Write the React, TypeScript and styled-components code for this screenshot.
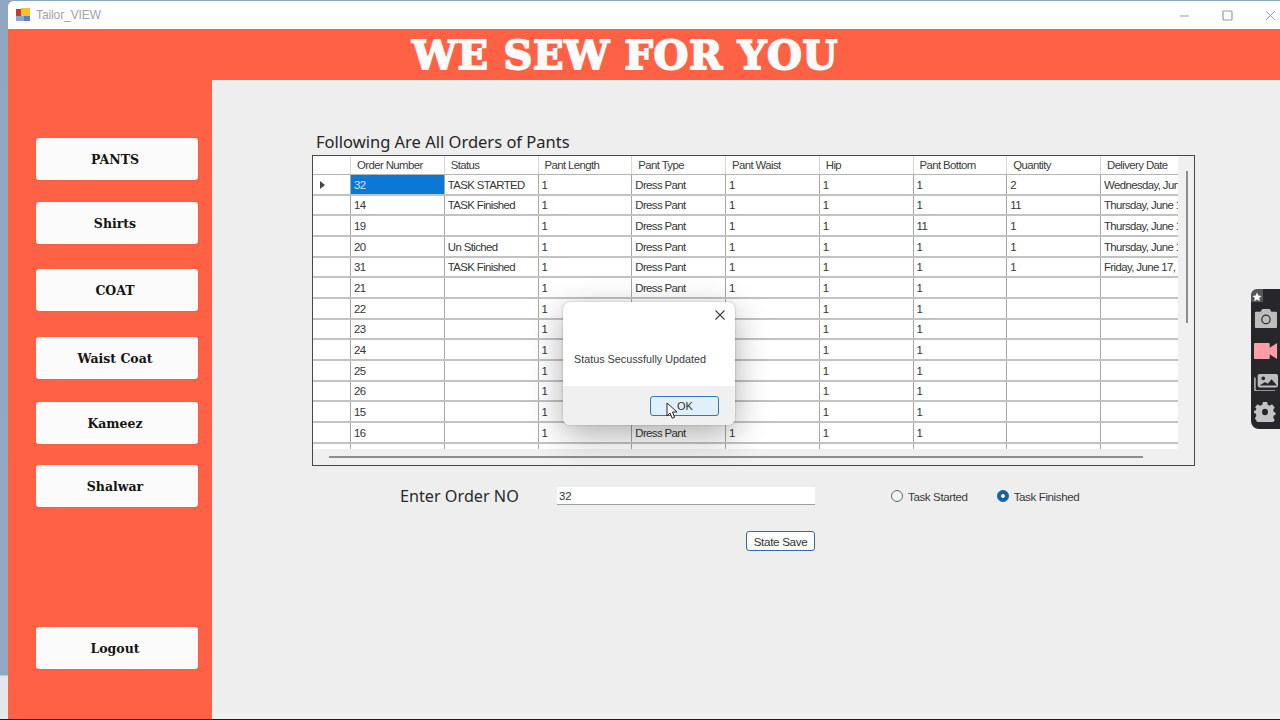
import React from "react";
import styled, { createGlobalStyle } from "styled-components";

const GlobalStyle = createGlobalStyle`
  html, body {
    margin: 0;
    padding: 0;
    background: #8ea6bf;
  }
  * {
    box-sizing: border-box;
  }
`;

const Desktop = styled.div`
  position: relative;
  width: 1280px;
  height: 720px;
  overflow: hidden;
  padding: 1px 0 0 8px;
  background: linear-gradient(#8fa7c0 0, #93a9c2 675px, #e3e7ec 676px);
  border-bottom: 1px solid #1c1c1c;
`;

const Window = styled.div`
  display: flex;
  flex-direction: column;
  height: 100%;
  border-top-left-radius: 6px;
  overflow: hidden;
  background: #eeeeef;
`;

const TitleBar = styled.div`
  display: flex;
  align-items: center;
  flex: 0 0 28px;
  padding-left: 8px;
  background: #fff;
`;

const AppName = styled.span`
  margin-left: 6px;
  font: 12px "Liberation Sans", sans-serif;
  letter-spacing: -0.1px;
  color: #a2a2a6;
`;

const WindowControls = styled.div`
  display: flex;
  align-items: center;
  margin-left: auto;
  margin-right: -12px;
  color: #9c9c9c;
`;

const WindowControl = styled.span`
  display: flex;
  justify-content: center;
  width: 43px;
`;

const Banner = styled.header`
  display: flex;
  justify-content: center;
  align-items: center;
  flex: 0 0 51px;
  padding-right: 38px;
  background: #ff6145;
`;

const BannerText = styled.h1`
  margin: 0;
  font: 700 40px "DejaVu Serif", serif;
  letter-spacing: 0.7px;
  color: #fdfafa;
  -webkit-text-stroke: 1.8px #fdfafa;
  white-space: nowrap;
`;

const Body = styled.div`
  display: flex;
  flex: 1;
  min-height: 0;
`;

const Sidebar = styled.nav`
  display: flex;
  flex-direction: column;
  flex: 0 0 204px;
  padding: 58px 14px 50px 28px;
  background: #ff6145;
`;

const SideButton = styled.button<{ $gap: number }>`
  flex: 0 0 42px;
  margin-top: ${({ $gap }) => $gap}px;
  padding: 0 4px 0 0;
  border: 0;
  border-radius: 3px;
  background: #fcfbfb;
  box-shadow: 0 0 1px rgba(120, 50, 40, 0.6);
  font: 700 12.5px "DejaVu Serif", serif;
  color: #141414;
`;

const LogoutButton = styled(SideButton)`
  margin-top: auto;
`;

const Main = styled.main`
  flex: 1;
  padding: 50px 0 0 100px;
`;

const Heading = styled.h2`
  margin: 0;
  height: 25px;
  padding-left: 4px;
  font: 400 16.5px/24px "Noto Sans", sans-serif;
  color: #262626;
`;

const GridFrame = styled.div`
  display: flex;
  flex-direction: column;
  width: 883px;
  height: 311px;
  border: 1px solid #45474a;
  background: #f0f0f0;
`;

const GridBody = styled.div`
  display: flex;
  flex: 1;
  min-height: 0;
`;

const Viewport = styled.div`
  width: 865px;
  height: 293px;
  overflow: hidden;
  background: #fff;
`;

const Row = styled.div<{ $header?: boolean }>`
  display: grid;
  grid-template-columns: 38px repeat(8, 93.75px) 100px;
  height: ${({ $header }) => ($header ? "19px" : "20.67px")};
  border-bottom: ${({ $header }) => ($header ? "1px solid #b4b4b4" : "2px solid #c2c2c2")};
  font: 11.4px "Liberation Sans", sans-serif;
  letter-spacing: -0.6px;
  color: ${({ $header }) => ($header ? "#3c3c3c" : "#353535")};
`;

const Cell = styled.div<{ $selected?: boolean }>`
  display: flex;
  align-items: center;
  padding: 1px 0 0 3px;
  overflow: hidden;
  white-space: nowrap;
  border-right: 1px solid #a6a6a6;
  background: ${({ $selected }) => ($selected ? "#0a78d4" : "transparent")};
  color: ${({ $selected }) => ($selected ? "#cfe6fb" : "inherit")};
`;

const HeadCell = styled(Cell)`
  padding: 0 0 0 6px;
  border-right-color: #d9d9d9;
`;

const RowMarker = styled.i`
  width: 0;
  height: 0;
  margin-left: 4px;
  border-left: 5px solid #444;
  border-top: 4px solid transparent;
  border-bottom: 4px solid transparent;
`;

const VScroll = styled.div`
  position: relative;
  flex: 1;
`;

const VThumb = styled.div`
  position: absolute;
  left: 8px;
  top: 15px;
  width: 2px;
  height: 152px;
  background: #8e8e8e;
`;

const HScroll = styled.div`
  display: flex;
  align-items: center;
  flex: 0 0 16px;
  padding-left: 16px;
`;

const HThumb = styled.div`
  width: 814px;
  height: 2px;
  background: #8e8e8e;
`;

const FormRow = styled.div`
  display: flex;
  align-items: center;
  height: 20px;
  margin-top: 20px;
  padding-left: 88px;
`;

const FormLabel = styled.label`
  width: 157px;
  font: 400 16.2px "Noto Sans", sans-serif;
  color: #2a2a2a;
`;

const OrderInput = styled.input`
  width: 258px;
  height: 18px;
  padding: 0 0 0 2px;
  border: 0;
  border-bottom: 1px solid #a0a0a0;
  background: #fff;
  font: 11.4px "Liberation Sans", sans-serif;
  color: #333;
  outline: 0;
`;

const RadioLabel = styled.span<{ $gap: number }>`
  display: flex;
  align-items: center;
  gap: 5px;
  margin-left: ${({ $gap }) => $gap}px;
  font: 11.6px "Liberation Sans", sans-serif;
  letter-spacing: -0.4px;
  color: #3a3a3a;
`;

const RadioMark = styled.i<{ $checked?: boolean }>`
  width: 12px;
  height: 12px;
  border-radius: 50%;
  border: 1px solid ${({ $checked }) => ($checked ? "#0f62ae" : "#666")};
  background: ${({ $checked }) =>
    $checked ? "radial-gradient(circle, #fff 0 1.6px, #0f62ae 2.2px)" : "#f4f4f4"};
`;

const SaveRow = styled.div`
  display: flex;
  margin-top: 25px;
  padding-left: 434px;
`;

const SaveButton = styled.button`
  width: 69px;
  height: 20px;
  padding: 0;
  border: 1px solid #2a6ea8;
  border-radius: 3px;
  background: #fdfdfd;
  font: 11.6px "Liberation Sans", sans-serif;
  letter-spacing: -0.3px;
  color: #333;
`;

const Dialog = styled.div`
  position: absolute;
  left: 563px;
  top: 302px;
  display: flex;
  flex-direction: column;
  width: 172px;
  height: 123px;
  border-radius: 7px;
  overflow: hidden;
  background: #fff;
  box-shadow: 0 10px 34px rgba(0, 0, 0, 0.32), 0 0 2px rgba(0, 0, 0, 0.3);
`;

const DialogBody = styled.div`
  display: flex;
  flex-direction: column;
  flex: 1;
  padding: 7px 9px 0 11px;
  color: #333;
`;

const DialogClose = styled.span`
  display: flex;
  justify-content: flex-end;
  color: #444;
`;

const DialogText = styled.p`
  margin: 32px 0 0;
  font: 10.8px "Liberation Sans", sans-serif;
  color: #3a3a40;
  white-space: nowrap;
`;

const DialogFooter = styled.div`
  display: flex;
  justify-content: flex-end;
  align-items: center;
  flex: 0 0 39px;
  padding-right: 16px;
  background: #f0f0f0;
`;

const OkButton = styled.button`
  width: 69px;
  height: 20px;
  padding: 0 0 0 1px;
  border: 1px solid #2a7ab8;
  border-radius: 3px;
  background: #e1effa;
  font: 11px "Liberation Sans", sans-serif;
  color: #333;
`;

const Pointer = styled.svg`
  position: absolute;
  left: 666px;
  top: 402px;
`;

const CaptureBar = styled.aside`
  position: absolute;
  right: 0;
  top: 289px;
  display: flex;
  flex-direction: column;
  align-items: flex-start;
  width: 29px;
  height: 140px;
  padding-left: 3px;
  border-radius: 8px 0 0 8px;
  background: #26262b;
`;

const PinTab = styled.span`
  position: absolute;
  left: 0;
  top: 0;
  width: 12px;
  height: 13px;
  border-radius: 6px 0 0 0;
  background: #55555a;
`;

const CaptureIcon = styled.svg<{ $top: number }>`
  display: block;
  flex: none;
  margin-top: ${({ $top }) => $top}px;
`;

const columns = [
  "Order Number",
  "Status",
  "Pant Length",
  "Pant Type",
  "Pant Waist",
  "Hip",
  "Pant Bottom",
  "Quantity",
  "Delivery Date",
];

const orders = [
  ["32", "TASK STARTED", "1", "2", "Wednesday, June 15, 2022"],
  ["14", "TASK Finished", "1", "11", "Thursday, June 16, 2022"],
  ["19", "", "11", "1", "Thursday, June 16, 2022"],
  ["20", "Un Stiched", "1", "1", "Thursday, June 16, 2022"],
  ["31", "TASK Finished", "1", "1", "Friday, June 17, 2022"],
  ["21", "", "1", "", ""],
  ["22", "", "1", "", ""],
  ["23", "", "1", "", ""],
  ["24", "", "1", "", ""],
  ["25", "", "1", "", ""],
  ["26", "", "1", "", ""],
  ["15", "", "1", "", ""],
  ["16", "", "1", "", ""],
];

const sideItems = [
  { label: "PANTS", gap: 0 },
  { label: "Shirts", gap: 22 },
  { label: "COAT", gap: 25 },
  { label: "Waist Coat", gap: 26 },
  { label: "Kameez", gap: 23 },
  { label: "Shalwar", gap: 21 },
];

const AppIcon = () => (
  <svg width="14" height="14" viewBox="0 0 14 14">
    <rect x="0" y="1" width="6" height="7" fill="#c23b32" />
    <rect x="5" y="0" width="9" height="8" fill="#f2c230" />
    <rect x="0" y="8" width="8" height="5" fill="#8aa4d6" />
    <rect x="8" y="8" width="6" height="5" fill="#5b7fc4" />
  </svg>
);

const App = () => {
  return (
    <Desktop>
      <GlobalStyle />
      <Window>
        <TitleBar>
          <AppIcon />
          <AppName>Tailor_VIEW</AppName>
          <WindowControls>
            <WindowControl>
              <svg width="11" height="11" viewBox="0 0 11 11">
                <path d="M1 6h9" stroke="currentColor" strokeWidth="1" />
              </svg>
            </WindowControl>
            <WindowControl>
              <svg width="11" height="11" viewBox="0 0 11 11">
                <rect x="1" y="1" width="9" height="9" rx="1" fill="none" stroke="currentColor" strokeWidth="1.2" />
              </svg>
            </WindowControl>
            <WindowControl>
              <svg width="11" height="11" viewBox="0 0 11 11">
                <path d="M1 1l9 9M10 1l-9 9" stroke="currentColor" strokeWidth="1" />
              </svg>
            </WindowControl>
          </WindowControls>
        </TitleBar>
        <Banner>
          <BannerText>WE SEW FOR YOU</BannerText>
        </Banner>
        <Body>
          <Sidebar>
            {sideItems.map((item) => (
              <SideButton key={item.label} $gap={item.gap}>
                {item.label}
              </SideButton>
            ))}
            <LogoutButton $gap={0}>Logout</LogoutButton>
          </Sidebar>
          <Main>
            <Heading>Following Are All Orders of Pants</Heading>
            <GridFrame>
              <GridBody>
                <Viewport>
                  <Row $header>
                    <HeadCell />
                    {columns.map((name) => (
                      <HeadCell key={name}>{name}</HeadCell>
                    ))}
                  </Row>
                  {orders.map((order, index) => (
                    <Row key={order[0]}>
                      <Cell>{index === 0 && <RowMarker />}</Cell>
                      <Cell $selected={index === 0}>{order[0]}</Cell>
                      <Cell>{order[1]}</Cell>
                      <Cell>1</Cell>
                      <Cell>Dress Pant</Cell>
                      <Cell>1</Cell>
                      <Cell>1</Cell>
                      <Cell>{order[2]}</Cell>
                      <Cell>{order[3]}</Cell>
                      <Cell>{order[4]}</Cell>
                    </Row>
                  ))}
                  <Row>
                    {Array.from({ length: 10 }, (_, i) => (
                      <Cell key={i} />
                    ))}
                  </Row>
                </Viewport>
                <VScroll>
                  <VThumb />
                </VScroll>
              </GridBody>
              <HScroll>
                <HThumb />
              </HScroll>
            </GridFrame>
            <FormRow>
              <FormLabel>Enter Order NO</FormLabel>
              <OrderInput readOnly value="32" />
              <RadioLabel $gap={76}>
                <RadioMark />
                Task Started
              </RadioLabel>
              <RadioLabel $gap={29}>
                <RadioMark $checked />
                Task Finished
              </RadioLabel>
            </FormRow>
            <SaveRow>
              <SaveButton>State Save</SaveButton>
            </SaveRow>
          </Main>
        </Body>
      </Window>

      <Dialog>
        <DialogBody>
          <DialogClose>
            <svg width="12" height="12" viewBox="0 0 12 12">
              <path d="M1.5 1.5l9 9M10.5 1.5l-9 9" stroke="currentColor" strokeWidth="1.2" />
            </svg>
          </DialogClose>
          <DialogText>Status Secussfully Updated</DialogText>
        </DialogBody>
        <DialogFooter>
          <OkButton>OK</OkButton>
        </DialogFooter>
      </Dialog>
      <Pointer width="13" height="18" viewBox="0 0 13 18">
        <path d="M1 1v13l3-3 2.2 5.2 2.4-1L6.5 10H11z" fill="#fff" stroke="#222" strokeWidth="1" />
      </Pointer>

      <CaptureBar>
        <PinTab>
          <svg width="12" height="12" viewBox="0 0 12 12">
            <path d="M6 1.5l1.4 3 3.1.4-2.3 2.1.7 3.2L6 8.6l-2.9 1.6.7-3.2L1.5 4.9l3.1-.4z" fill="#fff" />
          </svg>
        </PinTab>
        <CaptureIcon $top={20} width="23" height="19" viewBox="0 0 25 20" preserveAspectRatio="none">
          <path
            d="M2 3h5l2-3h8l2 3h5a1 1 0 0 1 1 1v15a1 1 0 0 1-1 1H2a1 1 0 0 1-1-1V4a1 1 0 0 1 1-1z"
            fill="#bdbdbd"
          />
          <circle cx="13" cy="11" r="4.5" fill="#bdbdbd" stroke="#2c2c30" strokeWidth="1.3" />
        </CaptureIcon>
        <CaptureIcon $top={15} width="24" height="16" viewBox="0 0 26 17" preserveAspectRatio="none">
          <path d="M1 0h15a1 1 0 0 1 1 1v4l8-5v17l-8-5v4a1 1 0 0 1-1 1H1a1 1 0 0 1-1-1V1a1 1 0 0 1 1-1z" fill="#ff9ea6" />
        </CaptureIcon>
        <CaptureIcon $top={14} width="24" height="18" viewBox="0 0 26 20" preserveAspectRatio="none">
          <path d="M1 5v13a2 2 0 0 0 2 2h20" fill="none" stroke="#bdbdbd" strokeWidth="1.6" />
          <rect x="4" y="1" width="22" height="15" rx="2" fill="#bdbdbd" />
          <circle cx="10" cy="6" r="2" fill="#26262b" />
          <path d="M6 14l6-4 3 2 4-5 6 7z" fill="#26262b" />
        </CaptureIcon>
        <CaptureIcon $top={11} width="22" height="20" viewBox="0 0 26 22" preserveAspectRatio="none">
          <path
            fill="#c4c4c4"
            fillRule="evenodd"
            d="M10.5 0h5l.7 3 2.4 1 2.7-1.6 3.2 3.6-1.8 2.5.6 2.5 2.2.9v2l-2.2 1-.6 2.4 1.8 2.6-3.2 3.5-2.7-1.6-2.4 1-.7 1.7h-5l-.7-1.7-2.4-1-2.7 1.6L1 17.9l1.8-2.6-.6-2.4-2.2-1v-2l2.2-.9.6-2.5L1 6l3.2-3.6L6.9 4l2.9-1zM13 7.5a3.5 3.5 0 1 0 0 7 3.5 3.5 0 0 0 0-7z"
          />
        </CaptureIcon>
      </CaptureBar>
    </Desktop>
  );
};

export default App;
